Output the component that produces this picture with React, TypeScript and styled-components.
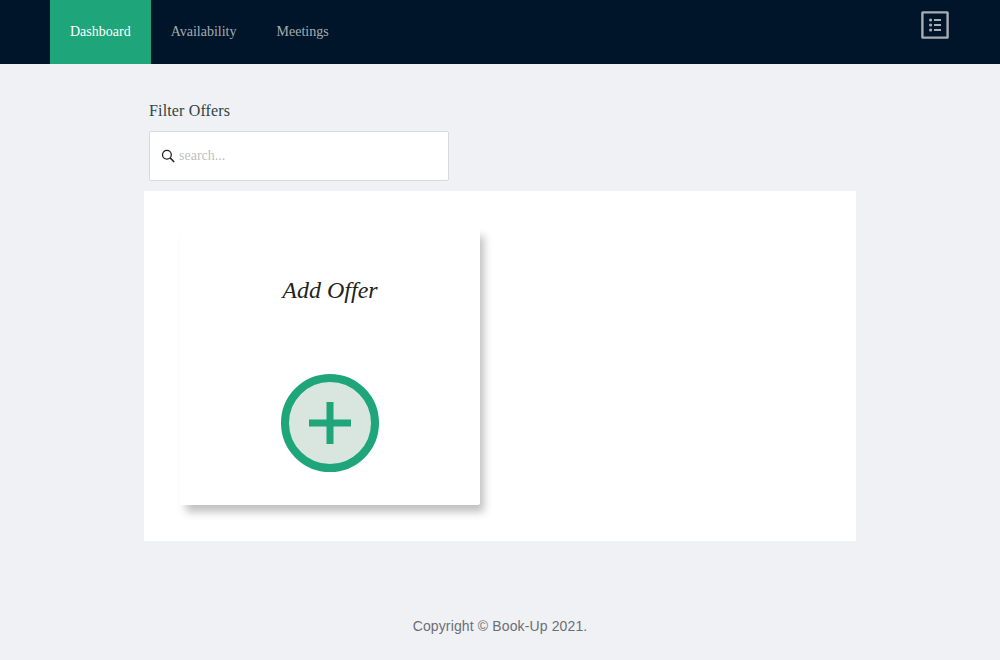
import React from 'react';
import styled, { createGlobalStyle } from 'styled-components';

const GlobalStyle = createGlobalStyle`
  *, *::before, *::after { box-sizing: border-box; }
  body {
    margin: 0;
    background: #f0f1f5;
    font-family: "Liberation Serif", "Times New Roman", serif;
    font-size: 14px;
  }
`;

const Page = styled.div`
  min-height: 660px;
  display: flex;
  flex-direction: column;
  background: #f0f1f5;
`;

const Header = styled.header`
  height: 64px;
  padding: 0 50px;
  display: flex;
  justify-content: space-between;
  align-items: flex-start;
  background: #001529;
`;

const Menu = styled.nav`
  display: flex;
`;

const MenuItem = styled.a<{ $active?: boolean }>`
  height: 64px;
  padding: 0 20px;
  line-height: 63px;
  color: ${(p) => (p.$active ? '#fff' : 'rgba(255, 255, 255, 0.65)')};
  background: ${(p) => (p.$active ? '#1ea579' : 'transparent')};
`;

const ListButton = styled.button`
  margin: 10px 0 0;
  padding: 0;
  border: 0;
  background: none;
  display: flex;
  color: #a6adb4;
`;

const Main = styled.main`
  width: 712px;
  margin: 0 auto;
  padding-top: 36px;
`;

const Filter = styled.section`
  padding: 0 5px 10px;
`;

const FilterTitle = styled.h2`
  height: 31px;
  margin: 0;
  font-size: 16px;
  font-weight: 400;
  line-height: 22px;
  letter-spacing: 0.15px;
  color: #2f4545;
`;

const SearchBox = styled.label`
  width: 300px;
  height: 50px;
  padding: 0 11px;
  display: flex;
  align-items: center;
  gap: 4px;
  border: 1px solid #d9d9d9;
  border-radius: 2px;
  background: #fff;
  color: #222;
`;

const SearchInput = styled.input`
  flex: 1;
  min-width: 0;
  padding: 0;
  border: 0;
  outline: 0;
  background: none;
  font: inherit;
  &::placeholder { color: #bfbfbf; opacity: 1; }
`;

const Offers = styled.section`
  height: 350px;
  padding: 36px;
  background: #fff;
`;

const Card = styled.article`
  width: 300px;
  height: 278px;
  padding-top: 45px;
  display: flex;
  flex-direction: column;
  align-items: center;
  border-radius: 2px;
  background: #fff;
  box-shadow: 5px 8px 8px -1px rgba(0, 0, 0, 0.25);
`;

const CardTitle = styled.h3`
  height: 102px;
  margin: 0;
  font-size: 24px;
  font-style: italic;
  font-weight: 400;
  line-height: 36px;
  color: #222;
`;

const Footer = styled.footer`
  margin-top: 74px;
  text-align: center;
  font-family: "Liberation Sans", Arial, sans-serif;
  line-height: 22px;
  letter-spacing: 0.13px;
  color: #6b6f73;
`;

const ListIcon = () => (
  <svg width="30" height="30" viewBox="0 0 30 30" fill="currentColor">
    <rect x="2.4" y="2.4" width="25.2" height="25.2" rx=".3" fill="none" stroke="currentColor" strokeWidth="2.4" />
    <circle cx="10.6" cy="10" r="1.6" />
    <circle cx="10.6" cy="15" r="1.6" />
    <circle cx="10.6" cy="20" r="1.6" />
    <path d="M14 8.9h7v2.2h-7zM14 13.9h7v2.2h-7zM14 18.9h7v2.2h-7z" />
  </svg>
);

const SearchIcon = () => (
  <svg width="14" height="14" viewBox="0 0 14 14" fill="none" stroke="currentColor">
    <circle cx="5.9" cy="5.7" r="4.4" strokeWidth="1.3" />
    <path d="M9.1 8.9 13.2 13" strokeWidth="1.5" />
  </svg>
);

const PlusCircle = () => (
  <svg width="98" height="98" viewBox="0 0 98 98">
    <circle cx="49" cy="49" r="45" fill="#d9e6df" stroke="#1ea579" strokeWidth="8" />
    <path d="M45.5 28h7v17.5H70v7H52.5V70h-7V52.5H28v-7h17.5z" fill="#1ea579" />
  </svg>
);

export default function App() {
  return (
    <Page>
      <GlobalStyle />
      <Header>
        <Menu>
          <MenuItem $active>Dashboard</MenuItem>
          <MenuItem>Availability</MenuItem>
          <MenuItem>Meetings</MenuItem>
        </Menu>
        <ListButton aria-label="Menu">
          <ListIcon />
        </ListButton>
      </Header>
      <Main>
        <Filter>
          <FilterTitle>Filter Offers</FilterTitle>
          <SearchBox>
            <SearchIcon />
            <SearchInput placeholder="search..." />
          </SearchBox>
        </Filter>
        <Offers>
          <Card>
            <CardTitle>Add Offer</CardTitle>
            <PlusCircle />
          </Card>
        </Offers>
      </Main>
      <Footer>Copyright © Book-Up 2021.</Footer>
    </Page>
  );
}
